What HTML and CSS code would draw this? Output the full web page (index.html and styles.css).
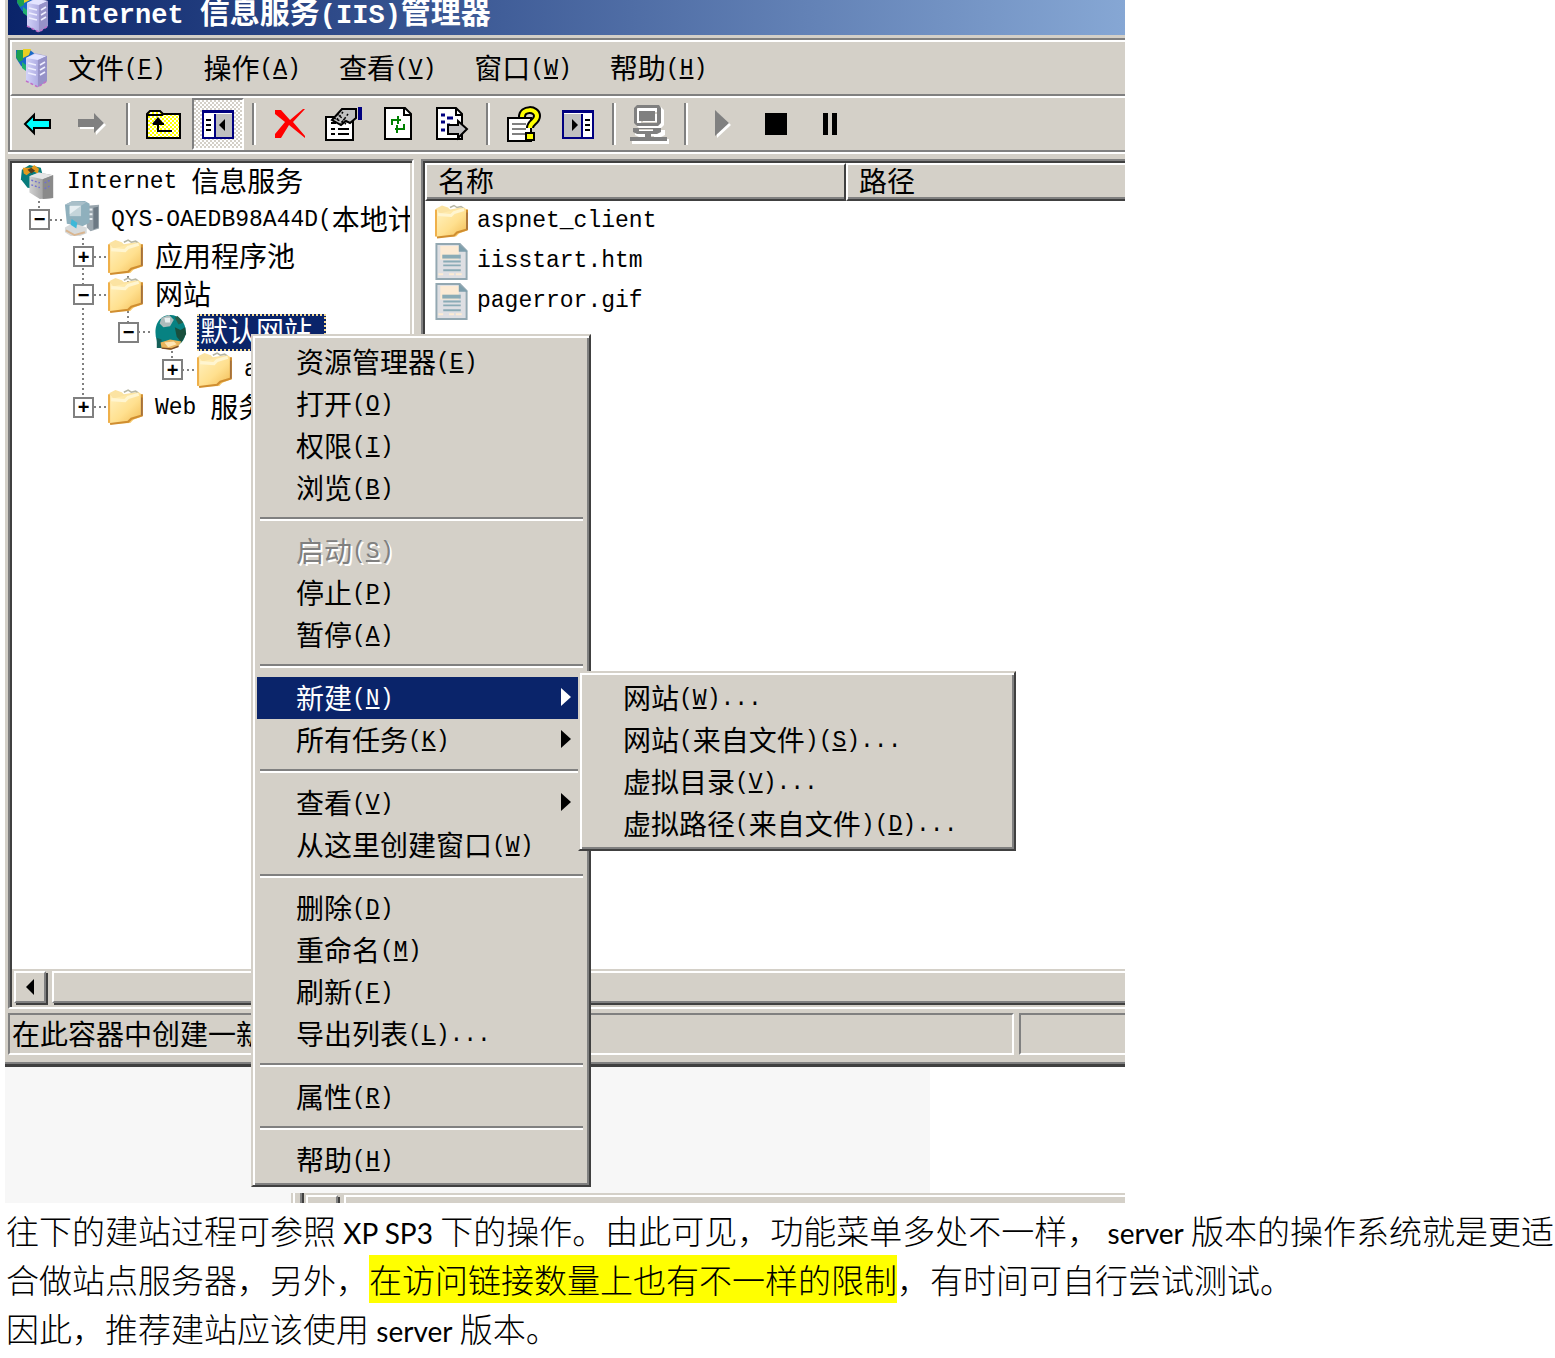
FILE: index.html
```html
<!DOCTYPE html>
<html lang="zh-CN">
<head>
<meta charset="utf-8">
<title>Internet 信息服务(IIS)管理器</title>
<link rel="stylesheet" href="styles.css">
</head>
<body>
<svg class="defs" width="0" height="0" aria-hidden="true">
  <defs>
    <linearGradient id="fg" x1="0" y1="0" x2="1" y2="1"><stop offset="0" stop-color="#fff3c4"/><stop offset=".55" stop-color="#ffe08f"/><stop offset="1" stop-color="#f0b84f"/></linearGradient>
    <linearGradient id="tower" x1="0" y1="0" x2="1" y2="0"><stop offset="0" stop-color="#d2d2f8"/><stop offset=".5" stop-color="#b4b2e6"/><stop offset="1" stop-color="#8480b4"/></linearGradient>
    <linearGradient id="grey" x1="0" y1="0" x2="1" y2="0"><stop offset="0" stop-color="#d0d0d0"/><stop offset="1" stop-color="#858585"/></linearGradient>
    <pattern id="dither" width="4" height="4" patternUnits="userSpaceOnUse"><rect width="4" height="4" fill="#ff0"/><rect width="2" height="2" fill="#fff"/><rect x="2" y="2" width="2" height="2" fill="#fff"/></pattern>
    <symbol id="server" viewBox="0 0 34 40">
      <path d="M1 2h14l5 4v12l-8 4-6-4-5-8z" fill="#1868c8"/><path d="M2 2h6v10l-4 2-3-5z" fill="#1ca050"/><path d="M8 1h8l-2 6-6 3z" fill="#e8d020"/><path d="M7 14l4 3v6l-4-3z" fill="#20b070"/>
      <path d="M11 10l9-5 12 3v25l-9 6-12-6z" fill="url(#tower)"/><path d="M11 10l9-4 12 2-9 4z" fill="#e4e4ff"/><path d="M23 12l9-4v25l-9 6z" fill="#9692c8"/>
      <path d="M13 15l8 2M13 20l8 2M13 25l8 2M25 17l5-3M25 22l5-3M25 27l5-3" stroke="#efefff" stroke-width="1.5"/><path d="M11 33l12 6 9-6" fill="none" stroke="#c070c8" stroke-width="1.5" stroke-dasharray="3 2"/>
    </symbol>
    <symbol id="iis" viewBox="0 0 36 38">
      <path d="M2 6l8-5 12 3 2 8-8 14-8-1-7-9z" fill="#087c7c"/><path d="M3 4h9l3-3 5 4-1 5-6-3-6 5-3-2z" fill="#e49a1c"/><path d="M8 6l4-2 4 3-4 3z" fill="#563c18"/>
      <path d="M10 13l10-4 15 3v24l-14 1-11-7z" fill="url(#grey)"/><path d="M10 13l10-4 15 3-11 4z" fill="#e5e5e5"/><path d="M24 16l11-4v24l-11 1z" fill="#8a8a8a"/><path d="M12 17l9 3M12 22l9 3M26 20l6-3M26 26l6-3" stroke="#7070d0" stroke-width="1.5" stroke-dasharray="2 2"/>
    </symbol>
    <symbol id="computer" viewBox="0 0 38 38">
      <path d="M24 5l13-1v25l-9 3-4-4z" fill="#9aa6ae"/><path d="M31 7l5-1v22l-5 2z" fill="#6c7984"/><path d="M26 9h4M26 14h4M26 19h4" stroke="#e9eef2" stroke-width="2"/>
      <path d="M1 4l8-4h13l5 3v20l-8 4-16-3z" fill="#8fb0bd"/><path d="M1 4l8-4 15 1-6 4z" fill="#a9bfc9"/><path d="M6 5h12v11H6z" fill="#c4d4da"/><path d="M6 14V5h12z" fill="#e6eef2"/>
      <path d="M6 25h9l9 3v6l-7 3H7l-6-4v-5z" fill="#d7dadb"/><path d="M8 19l6 4-1 6-6-4z" fill="#3eb8d8"/><path d="M2 31l9 5 11-3" fill="none" stroke="#d9b58f" stroke-width="2"/>
    </symbol>
    <symbol id="folder" viewBox="0 0 34 34">
      <path d="M1 4l6-3 6 2 2 2 11-2 4 1v4L5 12z" fill="#fbe3a2"/><path d="M15 3l4-2 3 2 4-1 3 2" fill="none" stroke="#b6b6a4" stroke-width="1.5"/>
      <path d="M1 4l4 5 24-6 4 3-1 20-8 3-3 3-19 1-1-2z" fill="url(#fg)"/><path d="M3 10l13 1 3-3 10-3" fill="none" stroke="#fff5d0" stroke-width="3"/><path d="M32 5v20l-10 3-3 3-17 2" fill="none" stroke="#d08e30" stroke-width="2"/><path d="M32 8v17" stroke="#8c6044" stroke-width="1"/><path d="M1 5v27" stroke="#efb04a" stroke-width="2"/>
    </symbol>
    <symbol id="globe" viewBox="0 0 34 38">
      <path d="M6 5C10 0 22-1 28 6c6 7 6 18 0 24l-7 6H3l-1-8C-1 19 1 9 6 5z" fill="#078282"/><path d="M7 4l8-3 5 5-4 7-7 1-4-4z" fill="#aebbbb"/><path d="M10 4h6v5h-5z" fill="#e9efef"/><path d="M21 14l6 3 5-3 1 7-5 9-5-6z" fill="#19503e"/><path d="M24 2l6 7-5 2-4-7z" fill="#285c48"/><path d="M2 25l5 2v9H2z" fill="#145f58"/><path d="M6 30l10-3 12 2-4 6-8 3-9-2z" fill="#eab55c"/><path d="M10 30l10-1 3 3-9 3z" fill="#ffe6b4"/><path d="M7 36l10 1 8-3" stroke="#7a4a24" stroke-width="1.5" fill="none"/>
    </symbol>
    <symbol id="page" viewBox="0 0 34 38">
      <path d="M1 1h24l7 7v29H1z" fill="#dedfe3" stroke="#93a8b2" stroke-width="2"/><path d="M5 3h19v14H5z" fill="#fdebd4"/><path d="M24 1v8h9z" fill="#7d9eac"/><path d="M7 12h19v4H7z" fill="#8aabb6"/><path d="M8 19h18M8 23h18M8 28h18" stroke="#8aabb6" stroke-width="2"/><path d="M3 32h5M14 32h5M21 32h6" stroke="#fdebd4" stroke-width="2"/>
    </symbol>
  </defs>
</svg>

<main>
<section class="desktop">
  <div class="window">
    <header class="title"><svg class="app"><use href="#server"/></svg><h1><span class="l">Internet </span>信息服务<span class="l">(IIS)</span>管理器</h1></header>
    <div class="rebar">
      <nav class="menubar" aria-label="菜单栏">
        <svg class="app"><use href="#server"/></svg>
        <button class="mix">文件<span class="l">(<u>F</u>)</span></button><button class="mix">操作<span class="l">(<u>A</u>)</span></button><button class="mix">查看<span class="l">(<u>V</u>)</span></button><button class="mix">窗口<span class="l">(<u>W</u>)</span></button><button class="mix">帮助<span class="l">(<u>H</u>)</span></button>
      </nav>
      <div class="toolbar" role="toolbar" aria-label="工具栏">
        <button aria-label="后退"><svg width="30" height="24" viewBox="0 0 30 24"><path d="M2 12l9-9v5h16v8H11v5z" fill="#0ff" stroke="#000" stroke-width="2"/></svg></button>
        <button aria-label="前进" disabled><svg width="32" height="26" viewBox="0 0 32 26"><path d="M4 10h16V4l10 10-10 10v-6H4z" fill="#fff"/><path d="M2 8h16V2l10 10-10 10v-6H2z" fill="#808080"/></svg></button>
        <span class="sep"></span>
        <button aria-label="向上"><svg width="36" height="32" viewBox="0 0 36 32"><path d="M1 30V6l3-3h10l3 3h17v24z" fill="url(#dither)" stroke="#000" stroke-width="2"/><path d="M2 7h15" stroke="#000" stroke-width="2"/><path d="M12 12v11h14M7 16h11M9 14h6" fill="none" stroke="#000" stroke-width="2"/><path d="M12 9l6 7H6z"/></svg></button>
        <button class="pressed" aria-label="显示树" aria-pressed="true"><svg width="34" height="30" viewBox="0 0 34 30"><path d="M1 1h32v28H1z" fill="#fff"/><path d="M14 5h18v23H14z" fill="#c0c0c0"/><path d="M1 3h32M2 1v28h30V1M14 5v24M1 2h32" fill="none" stroke="#000080" stroke-width="2"/><path d="M5 11h5M5 16h5M5 21h5" stroke="#000" stroke-width="2"/><path d="M24 10v12l-6-6z"/></svg></button>
        <span class="sep"></span>
        <button aria-label="删除"><svg width="34" height="34" viewBox="0 0 34 34"><path d="M2 3h6l9 10L30 2h2L20 15l12 14v2L16 18 8 31H2v-4l10-12L2 7z" fill="#f00"/></svg></button>
        <button aria-label="属性"><svg width="40" height="36" viewBox="0 0 40 36"><path d="M2 11h27v23H2z" fill="#fff" stroke="#000" stroke-width="2"/><path d="M7 17h5M7 23h4M7 28h4M14 23h11M14 28h11" stroke="#000" stroke-width="2"/><path d="M8 14l10-11h14v9l-6 5-4-2-5 4z" fill="#c0c0c0" stroke="#000" stroke-width="2"/><path d="M10 12l12 6M13 8l10 8M19 6L10 17M24 8l-8 11" stroke="#000" stroke-width="1.5" stroke-dasharray="2 2"/><path d="M34 1h4v13h-4z" fill="#000080"/></svg></button>
        <button aria-label="刷新"><svg width="30" height="36" viewBox="0 0 30 36"><path d="M2 2h20l6 6v25H2z" fill="#fff" stroke="#000" stroke-width="2"/><path d="M21 2v7h7" fill="none" stroke="#000" stroke-width="2"/><path d="M9 19v-5h9M15 10v8M21 18v5h-9M14 19v8" fill="none" stroke="#008000" stroke-width="2"/></svg></button>
        <button aria-label="导出列表"><svg width="34" height="36" viewBox="0 0 34 36"><path d="M2 2h19l6 6v25H2z" fill="#fff" stroke="#000" stroke-width="2"/><path d="M21 2v7h6" fill="none" stroke="#000" stroke-width="2"/><path d="M6 9h4M6 16h4M6 24h4M12 12h6M12 19h3" stroke="#000080" stroke-width="3"/><path d="M13 19h10v-4l9 8-9 9v-4H13z" fill="#c0c0c0" stroke="#000" stroke-width="2"/></svg></button>
        <span class="sep"></span>
        <button aria-label="帮助"><svg width="36" height="38" viewBox="0 0 36 38"><path d="M2 13h23v23H2z" fill="#fff" stroke="#000" stroke-width="2"/><path d="M6 19h14M6 24h14M6 29h14" stroke="#808080" stroke-width="2"/><path d="M16 12c0-9 15-9 15-1 0 6-7 6-7 12" fill="none" stroke="#000" stroke-width="8"/><path d="M16 12c0-9 15-9 15-1 0 6-7 6-7 12" fill="none" stroke="#ff0" stroke-width="4"/><path d="M20 28h8v7h-8z" fill="#ff0" stroke="#000" stroke-width="2"/></svg></button>
        <button aria-label="操作窗格"><svg width="34" height="30" viewBox="0 0 34 30"><path d="M1 1h32v28H1z" fill="#fff"/><path d="M2 5h18v23H2z" fill="#c0c0c0"/><path d="M1 3h32M2 1v28h30V1M21 5v24M1 2h32" fill="none" stroke="#000080" stroke-width="2"/><path d="M24 11h5M24 16h5M24 21h5" stroke="#000" stroke-width="2"/><path d="M11 10v12l6-6z"/></svg></button>
        <span class="sep"></span>
        <button aria-label="连接" disabled><svg width="42" height="40" viewBox="0 0 42 40"><path d="M8 1h22l3 3v15l-3 3H8l-3-3V4zM10 6v12h18V6zM12 8h14v8H12zM4 24h30v5l-4 2H8l-4-2zM16 30h7v3h15v5H1v-5h15z" fill="#fff" fill-rule="evenodd" transform="translate(2 2)"/><path d="M8 1h22l2 3v15l-3 3H8l-3-3V4zM8 4v15h20V4zM10 7h16v10H10zM4 24h28v4l-4 2H8l-4-2zM10 25v2h14v-2zM16 30h6v3h16v4H1v-4h15z" fill="#808080" fill-rule="evenodd"/></svg></button>
        <span class="sep"></span>
        <button aria-label="启动" disabled><svg width="22" height="30" viewBox="0 0 22 30"><path d="M6 3l14 13L6 29z" fill="#fff"/><path d="M4 1l14 13L4 27z" fill="#808080"/></svg></button>
        <button aria-label="停止"><svg width="22" height="22"><path d="M0 0h22v22H0z"/></svg></button>
        <button aria-label="暂停"><svg width="16" height="22"><path d="M1 0h5v22H1zM10 0h5v22h-5z"/></svg></button>
      </div>
    </div>

    <div class="panes">
      <div class="pane tree-pane">
        <div class="tree-box">
          <svg class="lines" width="300" height="263"><path d="M27 38v9M71 75v169M116 113v47M160 188v10M38 57h14M82 94h14M82 132h14M126 169h14M170 207h14M82 244h14" fill="none" stroke="#808080" stroke-width="2" stroke-dasharray="2 3"/></svg>
          <ul class="tree">
            <li class="root"><svg class="ic"><use href="#iis"/></svg><span class="mix"><span class="l">Internet </span>信息服务</span></li>
            <li class="d0"><button class="ex" aria-label="折叠">−</button><svg class="ic"><use href="#computer"/></svg><span class="mix"><span class="l">QYS-OAEDB98A44D(</span>本地计算机<span class="l">)</span></span></li>
            <li class="d1"><button class="ex" aria-label="展开">+</button><svg class="ic"><use href="#folder"/></svg><span class="mix">应用程序池</span></li>
            <li class="d1"><button class="ex" aria-label="折叠">−</button><svg class="ic"><use href="#folder"/></svg><span class="mix">网站</span></li>
            <li class="d2"><button class="ex" aria-label="折叠">−</button><svg class="ic"><use href="#globe"/></svg><span class="sel">默认网站</span></li>
            <li class="d3"><button class="ex" aria-label="展开">+</button><svg class="ic"><use href="#folder"/></svg><span class="mix"><span class="l">aspnet</span></span></li>
            <li class="d1"><button class="ex" aria-label="展开">+</button><svg class="ic"><use href="#folder"/></svg><span class="mix"><span class="l">Web </span>服务扩展</span></li>
          </ul>
        </div>
        <div class="scroll"><button class="arrow" aria-label="向左滚动"><svg width="10" height="16"><path d="M9 0v16L1 8z"/></svg></button><div class="thumb"></div></div>
      </div>
      <div class="pane list-pane">
        <table>
          <thead><tr><th class="c1" scope="col">名称</th><th scope="col">路径</th></tr></thead>
          <tbody>
            <tr><td><div class="file"><svg class="ic"><use href="#folder"/></svg><span class="l">aspnet_client</span></div></td><td></td></tr>
            <tr><td><div class="file"><svg class="ic"><use href="#page"/></svg><span class="l">iisstart.htm</span></div></td><td></td></tr>
            <tr><td><div class="file"><svg class="ic"><use href="#page"/></svg><span class="l">pagerror.gif</span></div></td><td></td></tr>
          </tbody>
        </table>
        <div class="scroll"><div class="thumb"></div></div>
      </div>
    </div>
    <footer class="status"><div class="cell">在此容器中创建一新网站。</div><div class="cell side"></div></footer>
  </div>
  <div class="behind"><div class="blank"></div><div class="strip"><div class="arrow"></div><div class="thumb"></div></div></div>

  <ul class="menu context">
    <li><button class="mix">资源管理器<span class="l">(<u>E</u>)</span></button></li>
    <li><button class="mix">打开<span class="l">(<u>O</u>)</span></button></li>
    <li><button class="mix">权限<span class="l">(<u>I</u>)</span></button></li>
    <li><button class="mix">浏览<span class="l">(<u>B</u>)</span></button></li>
    <li class="rule"></li>
    <li><button class="mix" disabled>启动<span class="l">(<u>S</u>)</span></button></li>
    <li><button class="mix">停止<span class="l">(<u>P</u>)</span></button></li>
    <li><button class="mix">暂停<span class="l">(<u>A</u>)</span></button></li>
    <li class="rule"></li>
    <li><button class="mix on">新建<span class="l">(<u>N</u>)</span><svg class="more" width="10" height="18"><path d="M0 0l10 9-10 9z"/></svg></button></li>
    <li><button class="mix">所有任务<span class="l">(<u>K</u>)</span><svg class="more" width="10" height="18"><path d="M0 0l10 9-10 9z"/></svg></button></li>
    <li class="rule"></li>
    <li><button class="mix">查看<span class="l">(<u>V</u>)</span><svg class="more" width="10" height="18"><path d="M0 0l10 9-10 9z"/></svg></button></li>
    <li><button class="mix">从这里创建窗口<span class="l">(<u>W</u>)</span></button></li>
    <li class="rule"></li>
    <li><button class="mix">删除<span class="l">(<u>D</u>)</span></button></li>
    <li><button class="mix">重命名<span class="l">(<u>M</u>)</span></button></li>
    <li><button class="mix">刷新<span class="l">(<u>F</u>)</span></button></li>
    <li><button class="mix">导出列表<span class="l">(<u>L</u>)...</span></button></li>
    <li class="rule"></li>
    <li><button class="mix">属性<span class="l">(<u>R</u>)</span></button></li>
    <li class="rule"></li>
    <li><button class="mix">帮助<span class="l">(<u>H</u>)</span></button></li>
  </ul>
  <ul class="menu sub">
    <li><button class="mix">网站<span class="l">(<u>W</u>)...</span></button></li>
    <li><button class="mix">网站<span class="l">(</span>来自文件<span class="l">)(<u>S</u>)...</span></button></li>
    <li><button class="mix">虚拟目录<span class="l">(<u>V</u>)...</span></button></li>
    <li><button class="mix">虚拟路径<span class="l">(</span>来自文件<span class="l">)(<u>D</u>)...</span></button></li>
  </ul>
</section>

<article class="prose">
  <p>往下的建站过程可参照 <span class="en">XP SP3</span> 下的操作。由此可见，功能菜单多处不一样， <span class="en">server</span> 版本的操作系统就是更适<br>合做站点服务器，另外，<mark>在访问链接数量上也有不一样的限制</mark>，有时间可自行尝试测试。</p>
  <p>因此，推荐建站应该使用 <span class="en">server</span> 版本。</p>
</article>
</main>
</body>
</html>
```
FILE: styles.css
```css
:root {
  --face: #d4d0c8;
  --shade: #808080;
  --dark: #404040;
  --navy: #0a246a;
}
*, *::before { box-sizing: border-box; }
body { margin: 0; background: #fff; color: #000; font: 28px/36px "Noto Sans CJK SC", sans-serif; }
ul, h1, p { margin: 0; padding: 0; list-style: none; }
button { font: inherit; color: inherit; background: none; border: 0; padding: 0; margin: 0; white-space: nowrap; }
svg { display: block; flex: none; }
.defs { position: absolute; }
.l { font-family: "Liberation Mono", monospace; font-size: 23px; white-space: pre; }
.mix { display: flex; align-items: center; padding-bottom: 3px; }
.mix .l { padding-top: 4px; }
u { text-decoration-thickness: 2px; text-underline-offset: 2px; }

.desktop { position: relative; width: 72%; margin-left: 5px; overflow: hidden; }
.window { background: var(--face); padding-left: 3px; border-bottom: 3px solid var(--dark); box-shadow: inset 0 -2px 0 var(--shade); }
.title { display: flex; height: 35px; gap: 4px; padding-left: 8px; align-items: flex-end; overflow: hidden; background: linear-gradient(90deg, #0a246a, #86a7d4); color: #fff; }
.title h1 { font-size: 30px; line-height: 38px; font-weight: 700; white-space: nowrap; }
.title .l { font-size: 27px; }
.app { width: 34px; height: 40px; }
.title .app { margin-bottom: 2px; }

.rebar { margin-top: 3px; border: 2px solid var(--shade); border-right: 0; box-shadow: 0 2px 0 #fff; }
.menubar { display: flex; align-items: center; height: 56px; padding-left: 3px; border: 2px solid #fff; border-width: 2px 0 0 2px; border-bottom: 2px solid var(--shade); }
.menubar button { padding-left: 19px; padding-right: 19px; }
.toolbar { display: flex; align-items: center; gap: 2px; height: 54px; border: 2px solid #fff; border-width: 2px 0 0 2px; }
.toolbar button { display: flex; width: 52px; height: 52px; align-items: center; justify-content: center; flex: none; }
.toolbar .pressed { border: 2px solid; border-color: var(--shade) #fff #fff var(--shade); background: repeating-conic-gradient(#fff 0 25%, var(--face) 0 50%) 0 0 / 4px 4px; }
.sep { width: 16px; height: 42px; flex: none; background: linear-gradient(90deg, var(--shade) 50%, #fff 50%) center / 4px 100% no-repeat; }

.panes { display: flex; gap: 7px; margin-top: 7px; min-height: 850px; }
.pane { display: flex; flex-direction: column; padding: 2px; background: #fff; border: 2px solid; border-color: var(--shade) #fff #fff var(--shade); box-shadow: inset 2px 2px 0 var(--dark), inset -2px -2px 0 var(--face); overflow: hidden; }
.tree-pane { width: 406px; flex: none; }
.list-pane { flex: 1; border-right: 0; padding-right: 0; box-shadow: inset 2px 2px 0 var(--dark), inset 0 -2px 0 var(--face); }
.tree-box { position: relative; flex: 1; overflow: hidden; }
.lines { position: absolute; left: 0; top: 0; }
.tree { position: relative; display: flex; flex-direction: column; height: 263px; }
.tree li { display: flex; flex: 1; min-height: 0; align-items: center; white-space: nowrap; }
.tree .ic { width: 36px; height: 36px; margin: 0 11px 0 14px; }
.tree .root .ic { margin: 0 12px 0 7px; }
.tree .d2 .ic { margin-right: 8px; }
.d0 { padding-left: 17px; }
.d1 { padding-left: 61px; }
.d2 { padding-left: 106px; }
.d3 { padding-left: 150px; }
.ex { display: grid; place-items: center; width: 21px; height: 21px; flex: none; border: 2px solid var(--shade); background: #fff; font: 700 20px/16px "Liberation Sans", sans-serif; }
.sel { height: 37px; padding: 0 12px 0 1px; background: var(--navy); color: #fff; border: 2px dotted #f5db95; line-height: 28px; }

.scroll { display: flex; height: 36px; flex: none; background: var(--face); margin-top: auto; }
.arrow, .thumb { border: 2px solid; border-color: #fff var(--shade) var(--shade) #fff; box-shadow: 2px 2px 0 var(--dark), 0 0 0 2px var(--face); background: var(--face); }
.arrow { display: grid; place-items: center; width: 32px; height: 32px; margin: 2px 0 0 2px; }
.thumb { flex: 1; height: 32px; margin: 2px 0 0 6px; border-right: 0; }
.list-pane .thumb { margin-left: 0; }

table { width: 100%; border-collapse: separate; border-spacing: 0; table-layout: fixed; }
th { height: 38px; padding: 0 0 4px 11px; text-align: left; font-weight: 400; line-height: 28px; background: var(--face); border: 2px solid; border-color: #fff var(--shade) var(--dark) #fff; box-shadow: inset 0 -2px 0 var(--shade); }
th:last-child { border-right: 0; }
.c1 { width: 421px; border-right-color: var(--dark); }
td { padding: 0; height: 40px; }
.file { display: flex; align-items: center; gap: 8px; padding-left: 10px; height: 40px; }
.file .ic { width: 34px; height: 37px; }

.status { display: flex; gap: 5px; padding: 4px 0 9px; }
.cell { height: 42px; flex: 1; padding-left: 2px; border: 2px solid; border-color: var(--shade) #fff #fff var(--shade); white-space: nowrap; overflow: hidden; }
.side { flex: 0 0 106px; border-right: 0; }

.behind { background: #fff; }
.blank { width: 925px; max-width: 100%; height: 126px; background: #f7f7f7; }
.strip { display: flex; height: 10px; padding-left: 299px; background: linear-gradient(90deg, #f7f7f7 286px, var(--face) 286px 288px, #fff 288px 290px, var(--face) 290px 295px, var(--shade) 295px 297px, var(--dark) 297px 299px, var(--face) 299px); overflow: hidden; }

.menu { position: absolute; padding: 4px; background: var(--face); border: 2px solid; border-color: var(--face) var(--dark) var(--dark) var(--face); box-shadow: inset 2px 2px 0 #fff, inset -2px -2px 0 var(--shade); }
.menu li { display: flex; }
.menu button { width: 100%; height: 42px; padding-left: 39px; padding-right: 12px; }
.menu button:disabled { color: var(--shade); text-shadow: 2px 2px 0 #fff; }
.menu .on { background: var(--navy); color: #fff; }
.menu .more { margin-left: auto; fill: currentColor; }
.menu .rule { height: 21px; padding: 8px 0 0 3px; }
.rule::before { content: ""; flex: 1; height: 4px; border-top: 2px solid var(--shade); border-bottom: 2px solid #fff; }
.context { left: 246px; top: 334px; width: 340px; padding: 5px 6px 4px 4px; }
.sub { left: 573px; top: 671px; width: 438px; }

.prose { padding: 3px 0 0 6px; font-size: 33px; line-height: 49px; font-weight: 300; white-space: nowrap; overflow: hidden; }
.en { font-family: Lato, sans-serif; font-weight: 400; font-size: 28px; line-height: 28px; }
mark { background: #ff0; color: inherit; }
```
